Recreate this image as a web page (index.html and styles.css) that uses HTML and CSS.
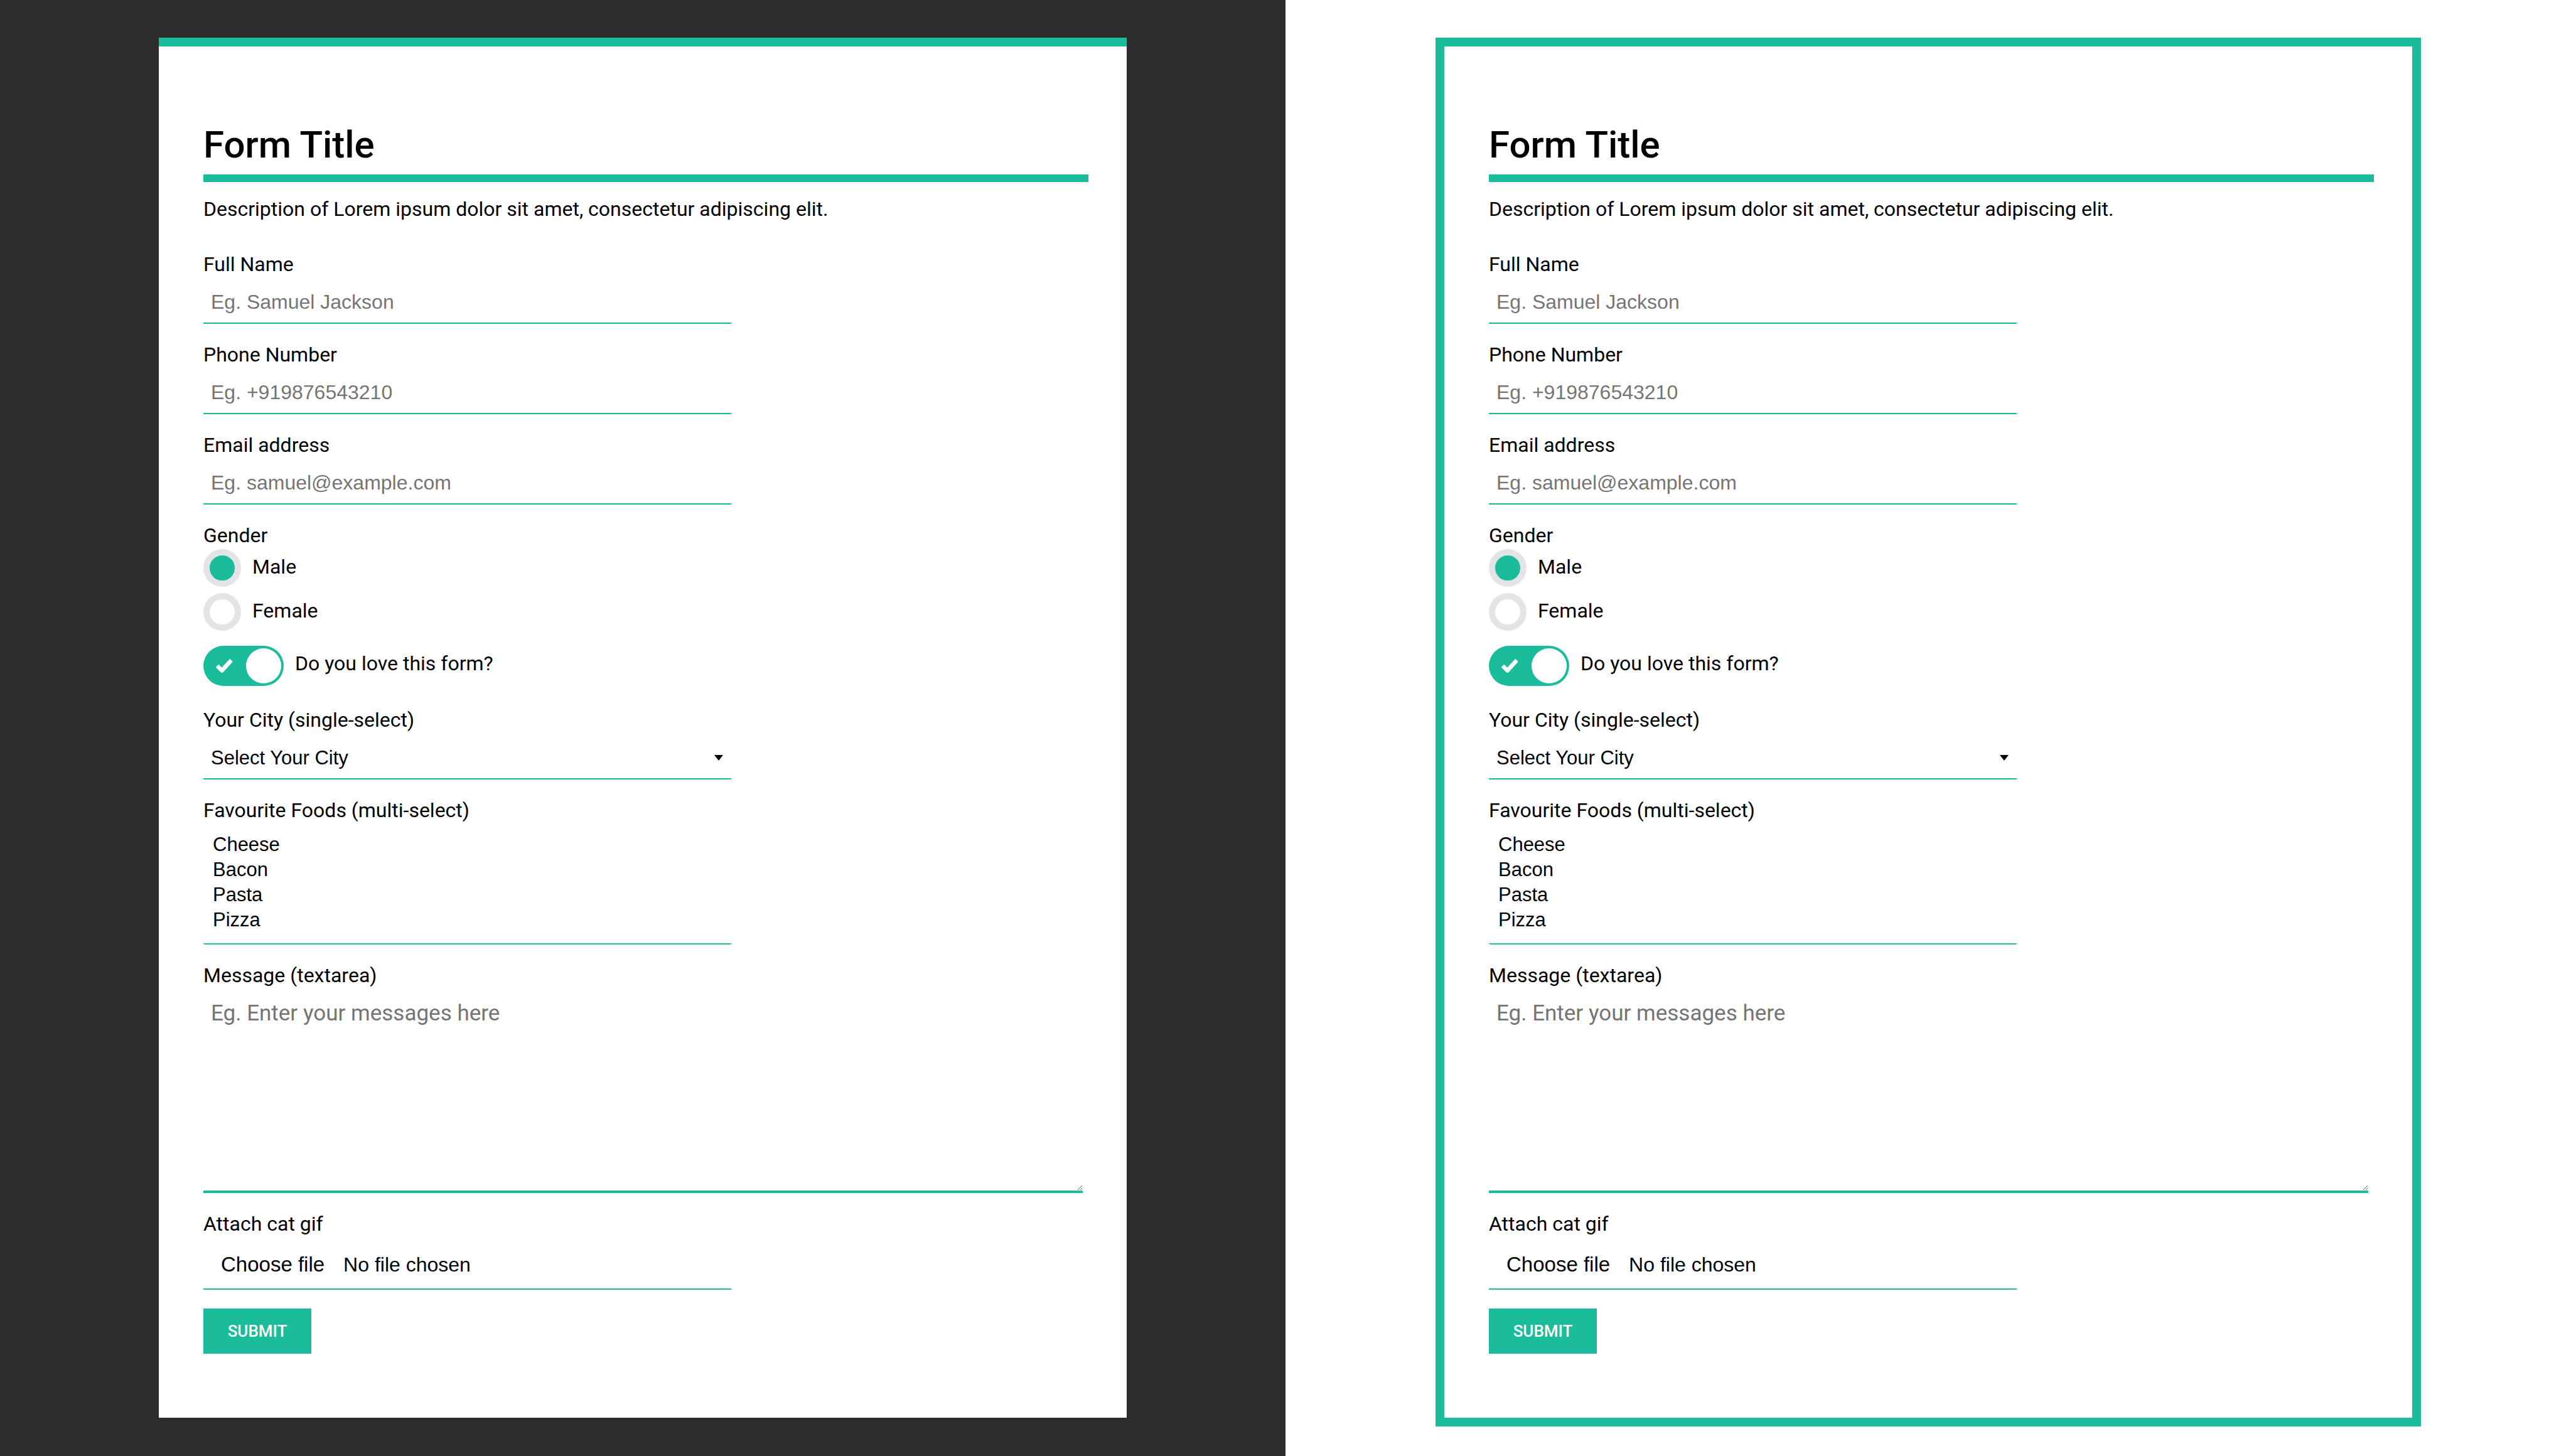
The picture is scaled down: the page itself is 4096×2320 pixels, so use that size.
FILE: index.html
```html
<!DOCTYPE html>
<html lang="en">
<head>
  <meta charset="UTF-8">
  <meta name="viewport" content="width=device-width, initial-scale=1.0">
  <title>Form Styles</title>
  <link rel="stylesheet" href="styles.css">
</head>
<body>
  <main class="page">

    <section class="half half-dark">
      <form class="card">
        <h1 class="form-title">Form Title</h1>
        <p class="form-desc">Description of Lorem ipsum dolor sit amet, consectetur adipiscing elit.</p>

        <div class="field">
          <label class="field-label" for="name-1">Full Name</label>
          <input class="text-input" id="name-1" type="text" placeholder="Eg. Samuel Jackson">
        </div>

        <div class="field">
          <label class="field-label" for="phone-1">Phone Number</label>
          <input class="text-input" id="phone-1" type="tel" placeholder="Eg. +919876543210">
        </div>

        <div class="field">
          <label class="field-label" for="email-1">Email address</label>
          <input class="text-input" id="email-1" type="email" placeholder="Eg. samuel@example.com">
        </div>

        <div class="field field-radio">
          <span class="field-label">Gender</span>
          <div class="radio-list">
            <label class="radio-row"><input class="radio" type="radio" name="gender-1" checked><span class="radio-text">Male</span></label>
            <label class="radio-row"><input class="radio" type="radio" name="gender-1"><span class="radio-text">Female</span></label>
          </div>
        </div>

        <label class="switch-row">
          <input class="switch-input" type="checkbox" checked>
          <span class="switch">
            <svg class="switch-check" viewBox="0 0 28 24" width="28" height="24"><path d="M3 12 L10.5 19.5 L25.5 3" fill="none" stroke="#fff" stroke-width="6.5" stroke-linejoin="round"/></svg>
            <span class="switch-knob"></span>
          </span>
          <span class="switch-text">Do you love this form?</span>
        </label>

        <div class="field">
          <label class="field-label" for="city-1">Your City (single-select)</label>
          <div class="select-wrap">
            <select class="select" id="city-1">
              <option>Select Your City</option>
              <option>Mumbai</option>
              <option>Delhi</option>
              <option>Bangalore</option>
            </select>
          </div>
        </div>

        <div class="field">
          <label class="field-label" for="food-1">Favourite Foods (multi-select)</label>
          <select class="multi-select" id="food-1" multiple size="4">
            <option>Cheese</option>
            <option>Bacon</option>
            <option>Pasta</option>
            <option>Pizza</option>
          </select>
        </div>

        <div class="field">
          <label class="field-label" for="msg-1">Message (textarea)</label>
          <textarea class="textarea" id="msg-1" placeholder="Eg. Enter your messages here"></textarea>
        </div>

        <div class="field">
          <span class="field-label">Attach cat gif</span>
          <label class="file-field">
            <input class="file-input" type="file" accept="image/gif">
            <span class="file-btn">Choose file</span>
            <span class="file-name">No file chosen</span>
          </label>
        </div>

        <button class="submit-btn" type="submit">SUBMIT</button>
      </form>
    </section>

    <section class="half half-light">
      <form class="card card-outline">
        <h1 class="form-title">Form Title</h1>
        <p class="form-desc">Description of Lorem ipsum dolor sit amet, consectetur adipiscing elit.</p>

        <div class="field">
          <label class="field-label" for="name-2">Full Name</label>
          <input class="text-input" id="name-2" type="text" placeholder="Eg. Samuel Jackson">
        </div>

        <div class="field">
          <label class="field-label" for="phone-2">Phone Number</label>
          <input class="text-input" id="phone-2" type="tel" placeholder="Eg. +919876543210">
        </div>

        <div class="field">
          <label class="field-label" for="email-2">Email address</label>
          <input class="text-input" id="email-2" type="email" placeholder="Eg. samuel@example.com">
        </div>

        <div class="field field-radio">
          <span class="field-label">Gender</span>
          <div class="radio-list">
            <label class="radio-row"><input class="radio" type="radio" name="gender-2" checked><span class="radio-text">Male</span></label>
            <label class="radio-row"><input class="radio" type="radio" name="gender-2"><span class="radio-text">Female</span></label>
          </div>
        </div>

        <label class="switch-row">
          <input class="switch-input" type="checkbox" checked>
          <span class="switch">
            <svg class="switch-check" viewBox="0 0 28 24" width="28" height="24"><path d="M3 12 L10.5 19.5 L25.5 3" fill="none" stroke="#fff" stroke-width="6.5" stroke-linejoin="round"/></svg>
            <span class="switch-knob"></span>
          </span>
          <span class="switch-text">Do you love this form?</span>
        </label>

        <div class="field">
          <label class="field-label" for="city-2">Your City (single-select)</label>
          <div class="select-wrap">
            <select class="select" id="city-2">
              <option>Select Your City</option>
              <option>Mumbai</option>
              <option>Delhi</option>
              <option>Bangalore</option>
            </select>
          </div>
        </div>

        <div class="field">
          <label class="field-label" for="food-2">Favourite Foods (multi-select)</label>
          <select class="multi-select" id="food-2" multiple size="4">
            <option>Cheese</option>
            <option>Bacon</option>
            <option>Pasta</option>
            <option>Pizza</option>
          </select>
        </div>

        <div class="field">
          <label class="field-label" for="msg-2">Message (textarea)</label>
          <textarea class="textarea" id="msg-2" placeholder="Eg. Enter your messages here"></textarea>
        </div>

        <div class="field">
          <span class="field-label">Attach cat gif</span>
          <label class="file-field">
            <input class="file-input" type="file" accept="image/gif">
            <span class="file-btn">Choose file</span>
            <span class="file-name">No file chosen</span>
          </label>
        </div>

        <button class="submit-btn" type="submit">SUBMIT</button>
      </form>
    </section>

  </main>
</body>
</html>
```

FILE: styles.css
```css
* {
  box-sizing: border-box;
}

body {
  margin: 0;
  font-family: Roboto, "Liberation Sans", sans-serif;
  color: #000;
}

.page {
  display: grid;
  grid-template-columns: 1fr 1fr;
  min-height: 100vh;
}

.half {
  display: flex;
  justify-content: center;
  align-items: flex-start;
  padding-top: 60px;
}

.half-dark {
  background: #2c2c2c;
}

.half-light {
  background: #fff;
}

.card {
  width: 1542px;
  background: #fff;
  border-top: 14px solid #1abc9c;
  padding: 121px 61px 102px 71px;
}

.card-outline {
  width: 1570px;
  border: 14px solid #1abc9c;
}

.form-title {
  margin: 0;
  font-size: 60px;
  line-height: 72px;
  font-weight: 500;
  padding-bottom: 11px;
  border-bottom: 12px solid #1abc9c;
}

.form-desc {
  margin: 24px 0 50px;
  font-size: 32px;
  line-height: 38px;
}

.field {
  margin-bottom: 30px;
}

.field-label {
  display: block;
  font-size: 32px;
  line-height: 38px;
  margin-bottom: 8px;
}

.text-input {
  display: block;
  width: 841px;
  height: 68px;
  padding: 0 12px;
  border: 0;
  border-bottom: 2px solid #1abc9c;
  background: transparent;
  font: 32px "Liberation Sans", Arial, sans-serif;
  color: #000;
  outline: none;
}

.text-input::placeholder,
.textarea::placeholder {
  color: #757575;
}

/* radio buttons */
.field-radio {
  margin-bottom: 24px;
}

.radio-list {
  display: flex;
  flex-direction: column;
  gap: 10px;
  margin-top: -5px;
}

.radio-row {
  display: flex;
  align-items: center;
  gap: 18px;
  font-size: 32px;
  line-height: 38px;
}

.radio {
  appearance: none;
  margin: 0;
  width: 60px;
  height: 60px;
  border: 10px solid #e2e4e5;
  border-radius: 50%;
  background: #fff;
}

.radio:checked {
  background: #1abc9c;
}

.radio-text {
  padding-bottom: 4px;
}

/* toggle */
.switch-row {
  display: flex;
  align-items: center;
  gap: 18px;
  margin-bottom: 35px;
  font-size: 32px;
  line-height: 38px;
}

.switch-input {
  display: none;
}

.switch {
  display: flex;
  align-items: center;
  justify-content: space-between;
  width: 128px;
  height: 64px;
  padding: 0 4px 0 19px;
  border-radius: 32px;
  background: #1abc9c;
}

.switch-knob {
  width: 56px;
  height: 56px;
  border-radius: 50%;
  background: #fff;
}

.switch-text {
  padding-bottom: 8px;
}

/* selects */
.select-wrap {
  position: relative;
  width: 841px;
}

.select-wrap::after {
  content: "";
  position: absolute;
  right: 13px;
  top: 29px;
  border-left: 7.5px solid transparent;
  border-right: 7.5px solid transparent;
  border-top: 9px solid #000;
  pointer-events: none;
}

.select {
  appearance: none;
  display: block;
  width: 100%;
  height: 68px;
  padding: 0 40px 0 12px;
  border: 0;
  border-bottom: 2px solid #1abc9c;
  border-radius: 0;
  background: transparent;
  font: 31px "Liberation Sans", Arial, sans-serif;
  color: #000;
  outline: none;
}

.multi-select {
  display: block;
  width: 841px;
  height: 187px;
  padding: 10px 12px 15px;
  border: 0;
  border-bottom: 2px solid #1abc9c;
  background: transparent;
  font: 31px "Liberation Sans", Arial, sans-serif;
  color: #000;
  overflow: hidden;
  outline: none;
}

.multi-select option {
  padding: 0 3px;
  line-height: 40px;
  min-height: 40px;
}

/* textarea */
.textarea {
  display: block;
  width: 1401px;
  height: 320px;
  padding: 14px 12px;
  border: 0;
  border-bottom: 4px solid #1abc9c;
  font-family: Roboto, sans-serif;
  font-size: 35px;
  line-height: 40px;
  outline: none;
}

/* file input */
.file-field {
  display: flex;
  width: 841px;
  padding: 19px 12px;
  border-bottom: 2px solid #1abc9c;
  font: 32px "Liberation Sans", Arial, sans-serif;
  line-height: 38px;
  cursor: pointer;
}

.file-input {
  display: none;
}

.file-btn {
  padding: 0 16px;
  margin-right: 14px;
  font-size: 33px;
}

.submit-btn {
  display: block;
  width: 172px;
  height: 72px;
  padding: 0;
  border: none;
  background: #1abc9c;
  color: #fff;
  font-family: Roboto, sans-serif;
  font-size: 26px;
  font-weight: 500;
  cursor: pointer;
}
```
